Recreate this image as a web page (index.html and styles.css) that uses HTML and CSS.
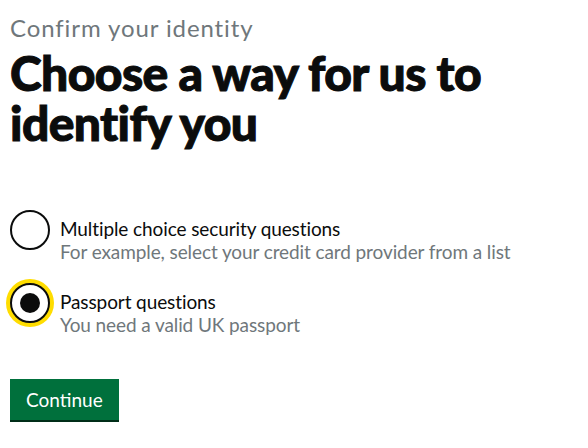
FILE: index.html
```html
<!DOCTYPE html>
<html lang="en">
<head>
  <meta charset="UTF-8">
  <title>Choose a way for us to identify you</title>
  <link rel="stylesheet" href="styles.css">
</head>
<body>
<main class="page">
  <span class="caption">Confirm your identity</span>
  <h1 class="heading">Choose a way for us to identify you</h1>
  <form class="choices">
    <div class="radio">
      <input type="radio" id="mcq" name="method">
      <label for="mcq" class="radio-label">
        Multiple choice security questions
        <span class="hint">For example, select your credit card provider from a list</span>
      </label>
    </div>
    <div class="radio">
      <input type="radio" id="passport" name="method" class="focused" checked>
      <label for="passport" class="radio-label">
        Passport questions
        <span class="hint">You need a valid UK passport</span>
      </label>
    </div>
    <button type="button" class="button">Continue</button>
  </form>
</main>
</body>
</html>
```

FILE: styles.css
```css
body {
  margin: 0;
  font-family: "Lato", "Liberation Sans", Arial, sans-serif;
  color: #0b0c0c;
  background: #fff;
}

.page {
  padding: 14px 10px;
}

.caption {
  display: block;
  font-size: 24px;
  line-height: 28px;
  letter-spacing: 0.9px;
  color: #6f777b;
}

.heading {
  margin: 6px 0 0;
  font-size: 48px;
  line-height: 50px;
  font-weight: 900;
  letter-spacing: -0.6px;
  -webkit-text-stroke: 1px #0b0c0c;
}

.choices {
  margin-top: 62px;
}

.radio {
  display: flex;
  align-items: flex-start;
  margin-bottom: 20px;
}

.radio input {
  appearance: none;
  margin: 0;
  width: 40px;
  height: 40px;
  border: 2px solid #0b0c0c;
  border-radius: 50%;
  box-sizing: border-box;
  background: #fff;
  flex: none;
  display: grid;
  place-items: center;
}

.radio input:checked::before {
  content: "";
  width: 20px;
  height: 20px;
  border-radius: 50%;
  background: #0b0c0c;
}

.radio input.focused {
  box-shadow: 0 0 0 4px #ffdd00;
}

.radio-label {
  padding: 7px 10px 0;
  font-size: 19px;
  line-height: 23px;
  letter-spacing: -0.1px;
}

.hint {
  display: block;
  color: #6f777b;
}

.button {
  margin-top: 23px;
  padding: 8px 16px;
  border: 0;
  background: #00703c;
  color: #fff;
  font: inherit;
  font-size: 19px;
  line-height: 25px;
  box-shadow: 0 2px 0 #002d18;
}
```
